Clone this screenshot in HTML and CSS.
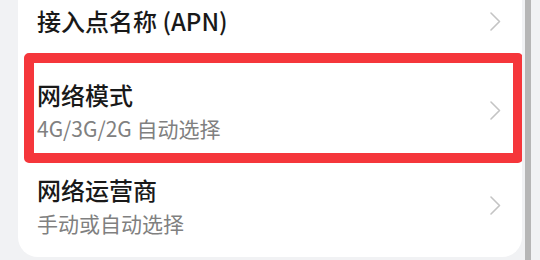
FILE: index.html
```html
<!DOCTYPE html>
<html lang="zh-CN">
<head>
  <meta charset="UTF-8">
  <meta name="viewport" content="width=device-width, initial-scale=1.0">
  <title>移动网络</title>
  <link rel="stylesheet" href="styles.css">
</head>
<body>
  <div class="screen">
    <!-- Settings list card -->
    <div class="card">
      <div class="row row-single">
        <div class="text">
          <div class="title">接入点名称 (APN)</div>
        </div>
        <svg class="chevron" viewBox="0 0 11 19"><polyline points="1,1 9.5,9.5 1,18"/></svg>
      </div>
      <div class="row">
        <div class="text">
          <div class="title">网络模式</div>
          <div class="subtitle">4G/3G/2G 自动选择</div>
        </div>
        <svg class="chevron" viewBox="0 0 11 19"><polyline points="1,1 9.5,9.5 1,18"/></svg>
      </div>
      <div class="row">
        <div class="text">
          <div class="title">网络运营商</div>
          <div class="subtitle">手动或自动选择</div>
        </div>
        <svg class="chevron" viewBox="0 0 11 19"><polyline points="1,1 9.5,9.5 1,18"/></svg>
      </div>

      <!-- highlight annotation -->
      <div class="highlight"></div>
    </div>

    <div class="scrollbar"></div>
  </div>
</body>
</html>
```

FILE: styles.css
```css
/* General */
body {
  margin: 0;
  background: #f1f2f4;
  font-family: "Noto Sans CJK SC", "Noto Sans", sans-serif;
  overflow: hidden;
}

.screen {
  display: flex;
  height: 260px;
  padding-left: 18px;
}

/* Card */
.card {
  position: relative;
  width: 504px;
  height: 257px;
  background: #ffffff;
  border-radius: 0 0 20px 20px;
  overflow: hidden;
}

.row {
  display: flex;
  align-items: center;
  height: 95px;
  padding: 0 21px 0 19px;
}

.row-single {
  height: 84px;
  margin-top: -21px;
}

.text {
  flex: 1;
}

.title {
  font-size: 24px;
  line-height: 32px;
  font-weight: 500;
  color: #191919;
}

.subtitle {
  margin-top: 3px;
  font-size: 21px;
  line-height: 28px;
  color: #808080;
}

.chevron {
  width: 11px;
  height: 19px;
  fill: none;
  stroke: #c4c4c4;
  stroke-width: 1.6;
  stroke-linecap: round;
  stroke-linejoin: round;
}

/* Red annotation box */
.highlight {
  position: absolute;
  left: 6px;
  top: 53px;
  width: 479px;
  height: 90px;
  border: 10px solid #f5363b;
  border-radius: 5px;
}

/* Scrollbar strip */
.scrollbar {
  width: 6px;
  margin-left: 3px;
  background: #b6b6b6;
}
```
